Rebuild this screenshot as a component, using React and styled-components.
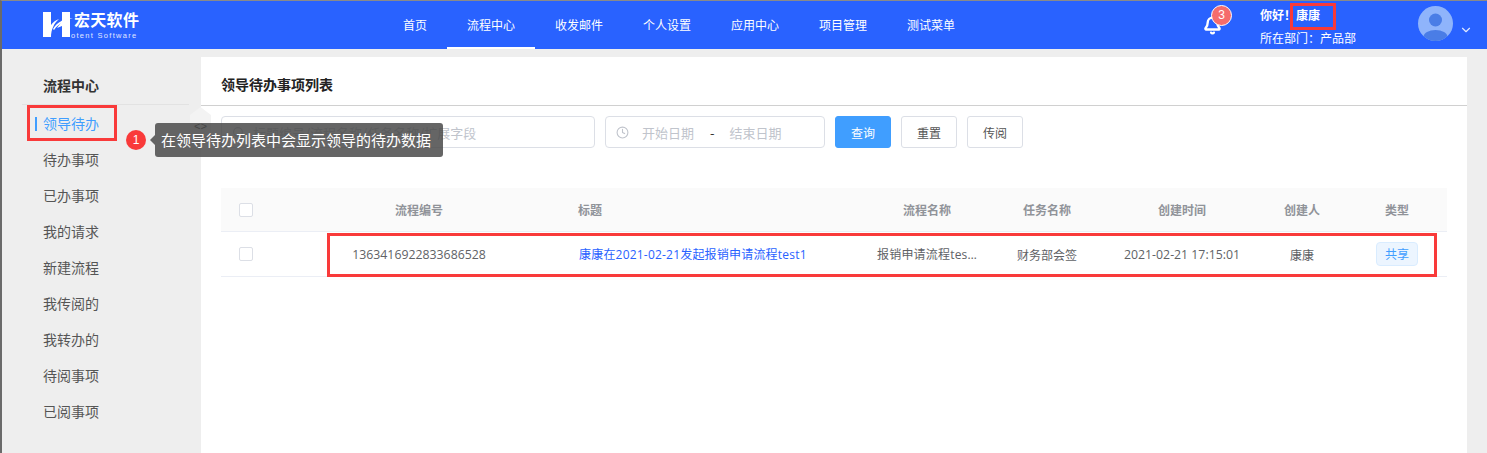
import React from "react";
import styled, { createGlobalStyle } from "styled-components";
import { Bell, Clock, Search, ChevronDown } from "lucide-react";

const Global = createGlobalStyle`
  html, body { margin: 0; padding: 0; background: #eeeeee; }
  body { font-family: "Noto Sans CJK SC", "Open Sans", sans-serif; overflow: hidden; }
  * { box-sizing: border-box; }
`;
const Page = styled.div`
  position: relative; width: 1487px; height: 453px; overflow: hidden;
  background: #eeeeee; border-left: 2px solid #6a6a6a; border-top: 1px solid #8a8a8a;
`;
const Header = styled.header`
  height: 48px; background: #2962ff; color: #fff; display: flex; align-items: stretch;
  padding: 0 14px 0 41px;
`;
const Logo = styled.div`
  width: 340px; display: flex; align-items: center; gap: 2px; padding-bottom: 1px;
`;
const LogoText = styled.div`display: flex; flex-direction: column; margin-left: -1px;`;
const LogoName = styled.div`font-size: 16px; font-weight: 700; line-height: 20px; letter-spacing: .3px;`;
const LogoSub = styled.div`font-family: "Liberation Sans", sans-serif; font-size: 7.5px; line-height: 9px; letter-spacing: 1.3px; opacity: .85; margin-top: 2px; margin-left: -3px;`;
const Nav = styled.nav`display: flex; flex: 1;`;
const NavItem = styled.a`
  padding: 0 20px; font-size: 12px; line-height: 48px; color: #fff;
  border-bottom: 2px solid ${p => (p.$active ? "#fff" : "transparent")};
`;
const BellWrap = styled.div`position: relative; width: 20px; margin: 15px 37px 0 0; color: #fff;`;
const Badge = styled.span`
  position: absolute; left: 8px; top: -11px; width: 21px; height: 21px; border-radius: 50%;
  background: #f56c6c; border: 1px solid #fff; font-size: 12px; line-height: 19px; text-align: center;
  font-family: "Liberation Sans", sans-serif;
`;
const User = styled.div`width: 158px; font-size: 12px; padding-top: 5px;`;
const Greet = styled.div`font-weight: 700; line-height: 18px; display: flex;`;
const Dept = styled.div`line-height: 18px; margin-top: 5px;`;
const Avatar = styled.div`width: 35px; height: 35px; margin-top: 5px; border-radius: 50%; overflow: hidden; background: #8fb4fb;`;
const Caret = styled.div`margin: 17px 0 0 6px; width: 14px; height: 14px; color: #dfe8ff;`;

const Body = styled.div`display: flex; height: 404px;`;
const Side = styled.aside`width: 199px; padding: 8px 12px 0 20px;`;
const SideTitle = styled.div`
  height: 48px; line-height: 56px; padding-left: 21px; font-size: 14px; font-weight: 700; color: #333;
  border-bottom: 1px solid #e2e2e2;
`;
const SideItem = styled.div`
  position: relative; height: 36px; line-height: 36px; padding-left: 21px; font-size: 14px;
  color: ${p => (p.$active ? "#409eff" : "#555")};
  ${p => p.$active && `&::before { content: ""; position: absolute; left: 13px; top: 12px; width: 2px; height: 14px; background: #409eff; }`}
`;
const Card = styled.main`width: 1266px; margin-top: 8px; background: #fff;`;
const CardTitle = styled.div`
  height: 49px; padding-left: 20px; line-height: 55px; font-size: 14px; font-weight: 700; color: #222;
  border-bottom: 1px solid #d0d0d0;
`;
const Toolbar = styled.div`display: flex; padding: 10px 20px 0; gap: 10px;`;
const Field = styled.div`
  width: ${p => p.$w}px; height: 32px; border: 1px solid #dcdfe6; border-radius: 4px; display: flex; align-items: center;
  padding-left: 10px; font-size: 13px; color: #c0c4cc;
`;
const FieldText = styled.span`margin-left: ${p => p.$ml || 0}px;`;
const Dash = styled.span`margin: 0 15px 0 16px; color: #333;`;
const Btn = styled.button`
  width: 56px; height: 32px; font: inherit; font-size: 12px; border-radius: 3px; padding: 0;
  border: 1px solid ${p => (p.$primary ? "#409eff" : "#dcdfe6")};
  background: ${p => (p.$primary ? "#409eff" : "#fff")};
  color: ${p => (p.$primary ? "#fff" : "#555")};
`;
const Table = styled.div`margin: 40px 20px 0; width: 1226px;`;
const Row = styled.div`
  display: grid; grid-template-columns: 49px 298px 299px 120px 120px 150px 90px 100px; align-items: center;
  height: ${p => p.$h}px; background: ${p => p.$head ? "#fafafa" : "#fff"};
  border-bottom: 1px solid #ebeef5;
  font-size: 12px; font-weight: ${p => p.$head ? 700 : 400};
  color: ${p => p.$head ? "#909399" : "#606266"};
`;
const Cell = styled.div`
  text-align: ${p => p.$left ? "left" : "center"}; padding: 0 10px; white-space: nowrap; overflow: hidden; text-overflow: ellipsis;
  color: ${p => p.$link ? "#2962ff" : "inherit"};
  ${p => p.$latin && `font-family: "Open Sans", "Noto Sans CJK SC", sans-serif; letter-spacing: .2px;`}
  ${p => p.$link && `padding-left: 11px;`}
`;
const Num = styled.span`font-family: "Open Sans", sans-serif; font-size: 12.3px;`;
const Check = styled.span`display: block; width: 14px; height: 14px; margin-left: 18px; border: 1px solid #dcdfe6; border-radius: 2px; background: #fff;`;
const Tag = styled.span`
  display: inline-block; width: 42px; height: 24px; line-height: 22px; border: 1px solid #d9ecff; background: #ecf5ff;
  color: #409eff; border-radius: 4px; font-size: 12px;
`;
const Mark = styled.div`
  position: absolute; left: ${p => p.$x}px; top: ${p => p.$y}px; width: ${p => p.$w}px; height: ${p => p.$h}px;
  border: 3px solid #f93a3a; pointer-events: none;
`;
const Handle = styled.div`
  position: absolute; left: 188px; top: 106px; width: 21px; height: 40px; background: #f3f3f3;
  clip-path: polygon(50% 0, 100% 20%, 100% 80%, 50% 100%, 0 80%, 0 20%);
  font-family: "Liberation Mono", monospace; font-size: 11px; color: #333; text-align: center; line-height: 40px;
`;
const Step = styled.div`
  position: absolute; left: 124px; top: 129px; width: 20px; height: 20px; border-radius: 50%;
  background: #f93a3a; color: #fff; font: 12px/20px "Liberation Sans", sans-serif; text-align: center;
`;
const Tip = styled.div`
  position: absolute; left: 153px; top: 122px; width: 288px; height: 34px; padding-left: 6px;
  background: rgba(72, 72, 72, .84); border-radius: 3px; color: #fff; font-size: 15px; line-height: 33px;
  &::before { content: ""; position: absolute; left: -5px; top: 12px; border: 5px solid transparent; border-left: 0; border-right-color: rgba(72,72,72,.84); }
`;

const nav = ["首页", "流程中心", "收发邮件", "个人设置", "应用中心", "项目管理", "测试菜单"];
const side = ["领导待办", "待办事项", "已办事项", "我的请求", "新建流程", "我传阅的", "我转办的", "待阅事项", "已阅事项"];

export default function App() {
  return (
    <Page>
      <Global />
      <Header>
        <Logo>
          <svg width="30" height="26" viewBox="0 0 30 26" fill="#fff">
            <path d="M0 0h8v13C10 10 13 8 16 7 11 11 8 18 8 25H0z" />
            <path d="M19 0h8v25h-8V14l-5 2c2-3 5-6 5-8z" />
            <path d="M10 17C14 10 22 6 30 6 23 8 16 11 11 18z" />
          </svg>
          <LogoText>
            <LogoName>宏天软件</LogoName>
            <LogoSub>otent Software</LogoSub>
          </LogoText>
        </Logo>
        <Nav>
          {nav.map((n, i) => <NavItem key={n} $active={i === 1}>{n}</NavItem>)}
        </Nav>
        <BellWrap>
          <Bell size={19} strokeWidth={3} />
          <Badge>3</Badge>
        </BellWrap>
        <User>
          <Greet><span>你好！</span><span>康康</span></Greet>
          <Dept>所在部门：产品部</Dept>
        </User>
        <Avatar>
          <svg width="35" height="35" viewBox="0 0 35 35" fill="#4a7de6">
            <circle cx="17.5" cy="14" r="6.5" />
            <ellipse cx="17.5" cy="31" rx="12" ry="7" />
          </svg>
        </Avatar>
        <Caret><ChevronDown size={14} /></Caret>
      </Header>
      <Body>
        <Side>
          <SideTitle>流程中心</SideTitle>
          {side.map((s, i) => <SideItem key={s} $active={i === 0}>{s}</SideItem>)}
        </Side>
        <Card>
          <CardTitle>领导待办事项列表</CardTitle>
          <Toolbar>
            <Field $w={374}>
              <Search size={13} color="#c0c4cc" />
              <FieldText $ml={8}>标题编号/流程名称/任务名称/扩展字段</FieldText>
            </Field>
            <Field $w={220}>
              <Clock size={13} color="#c0c4cc" />
              <FieldText $ml={13}>开始日期</FieldText>
              <Dash>-</Dash>
              <FieldText>结束日期</FieldText>
            </Field>
            <Btn $primary>查询</Btn>
            <Btn>重置</Btn>
            <Btn>传阅</Btn>
          </Toolbar>
          <Table>
            <Row $head $h={44}>
              <Check />
              <Cell>流程编号</Cell>
              <Cell $left>标题</Cell>
              <Cell>流程名称</Cell>
              <Cell>任务名称</Cell>
              <Cell>创建时间</Cell>
              <Cell>创建人</Cell>
              <Cell>类型</Cell>
            </Row>
            <Row $h={45}>
              <Check />
              <Cell><Num>1363416922833686528</Num></Cell>
              <Cell $left $link $latin>康康在2021-02-21发起报销申请流程test1</Cell>
              <Cell $left $latin>报销申请流程test1</Cell>
              <Cell>财务部会签</Cell>
              <Cell><Num>2021-02-21 17:15:01</Num></Cell>
              <Cell>康康</Cell>
              <Cell><Tag>共享</Tag></Cell>
            </Row>
          </Table>
        </Card>
      </Body>
      <Mark $x={25} $y={104} $w={90} $h={36} />
      <Mark $x={1288} $y={2} $w={46} $h={27} />
      <Mark $x={325} $y={232} $w={1110} $h={44} />
      <Handle>&lt;&gt;</Handle>
      <Step>1</Step>
      <Tip>在领导待办列表中会显示领导的待办数据</Tip>
    </Page>
  );
}
